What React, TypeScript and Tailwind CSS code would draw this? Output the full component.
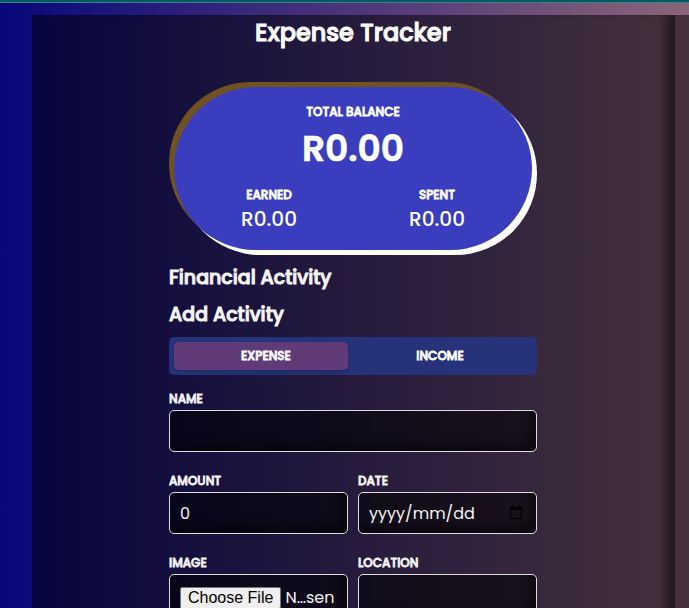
import { useState } from 'react';
import type { ReactNode } from 'react';

const box =
  'w-full min-w-0 rounded-[5px] border border-[#dddddd] bg-black/55 px-[10px] text-base text-[#f4f4f4] outline-none shadow-[inset_-12px_-12px_12px_-6px_rgba(0,0,0,0.5)] placeholder:text-[#f4f4f4]';
const control = `h-[42px] ${box}`;
const caption = 'text-xs leading-[18px] font-medium uppercase [-webkit-text-stroke:0.8px_currentColor]';
const heading = 'text-[19px] leading-[30px] font-medium [-webkit-text-stroke:1px_currentColor]';

function Field({ id, label, children }: { id: string; label: string; children: ReactNode }) {
  return (
    <div className="flex min-w-0 flex-1 flex-col">
      <label htmlFor={id} className={`h-5 ${caption}`}>
        {label}
      </label>
      {children}
    </div>
  );
}

function Total({ label, value }: { label: string; value: string }) {
  return (
    <div className="flex flex-1 flex-col items-center">
      <h3 className={caption}>{label}</h3>
      <p className="text-xl leading-[30px] font-medium">{value}</p>
    </div>
  );
}

function CalendarIcon() {
  return (
    <svg viewBox="0 0 14 16" className="h-4 w-[14px]" fill="none" stroke="#000" aria-hidden="true">
      <rect x="1.5" y="3.5" width="11" height="11" rx="0.5" strokeWidth="1.2" />
      <path d="M1 4.5h12" strokeWidth="3" />
      <path d="M3.5 1.5v3M10.5 1.5v3" strokeWidth="1.4" />
    </svg>
  );
}

export default function App() {
  const [kind, setKind] = useState('expense');

  return (
    <div className="flex h-screen flex-col overflow-hidden bg-[linear-gradient(to_right,#07077c,#4a357b,#8d6478)] font-['Poppins','Inter',sans-serif] text-[#f4f4f4]">
      <header className="h-[3px] shrink-0 border-b border-[#3e8287] bg-[#045a61]" />
      <div className="mt-3 ml-8 flex-1 bg-black/50 pr-[14px]">
        <main className="min-h-full pr-px shadow-[inset_-14px_0_10px_-4px_rgba(0,0,0,0.45)]">
          <div className="mx-auto flex w-full max-w-[368px] flex-col">
            <h1 className="text-center text-2xl leading-9 font-medium text-white [-webkit-text-stroke:1px_currentColor]">
              Expense Tracker
            </h1>

            <section className="mx-[5px] mt-9 mb-[5px] rounded-full bg-[#3a3dbe] pt-4 pb-4 text-white shadow-[5px_5px_0_#fff,-5px_-5px_0_#705220]">
              <div className="flex flex-col items-center">
                <h2 className={caption}>Total balance</h2>
                <p className="text-4xl leading-[56px] font-semibold [-webkit-text-stroke:0.6px_currentColor]">R0.00</p>
              </div>
              <div className="mt-[9px] flex px-[11px]">
                <Total label="Earned" value="R0.00" />
                <Total label="Spent" value="R0.00" />
              </div>
            </section>

            <h2 className={`mt-2 ${heading}`}>Financial Activity</h2>
            <h2 className={`mt-[7px] ${heading}`}>Add Activity</h2>

            <form className="mt-[7px] flex flex-col" onSubmit={(e) => e.preventDefault()}>
              <div className="relative flex rounded-[5px] bg-[#26337a] px-[10px] py-[5px] text-white">
                <span
                  className={`absolute top-[5px] bottom-[5px] w-[calc(50%-10px)] rounded-[5px] bg-[#613a78] shadow-md ${kind === 'expense' ? 'left-[5px]' : 'right-[5px]'}`}
                />
                {['expense', 'income'].map((name) => (
                  <button
                    key={name}
                    type="button"
                    aria-pressed={kind === name}
                    onClick={() => setKind(name)}
                    className={`relative h-7 flex-1 ${caption}`}
                  >
                    {name}
                  </button>
                ))}
              </div>

              <div className="mt-[15px] flex flex-col gap-5">
                <Field id="name" label="Name">
                  <input id="name" type="text" className={control} />
                </Field>
                <div className="flex gap-[10px]">
                  <Field id="amount" label="Amount">
                    <input id="amount" type="text" inputMode="decimal" defaultValue="0" className={control} />
                  </Field>
                  <Field id="date" label="Date">
                    <div className="relative">
                      <input id="date" type="text" placeholder="yyyy/mm/dd" className={control} />
                      <button type="button" aria-label="Open calendar" className="absolute top-3 right-[14px]">
                        <CalendarIcon />
                      </button>
                    </div>
                  </Field>
                </div>
                <div className="flex gap-[10px]">
                  <Field id="image" label="Image">
                    <input
                      id="image"
                      type="file"
                      className={`h-[46px] pt-[11px] ${box} file:mr-1 file:rounded-[2px] file:border file:border-solid file:border-[#767676] file:bg-[#efefef] file:px-[7px] file:font-['Liberation_Sans',sans-serif] file:leading-5 file:text-black`}
                    />
                  </Field>
                  <Field id="location" label="Location">
                    <input id="location" type="text" className={`h-[46px] ${box}`} />
                  </Field>
                </div>
              </div>
            </form>
          </div>
        </main>
      </div>
    </div>
  );
}
